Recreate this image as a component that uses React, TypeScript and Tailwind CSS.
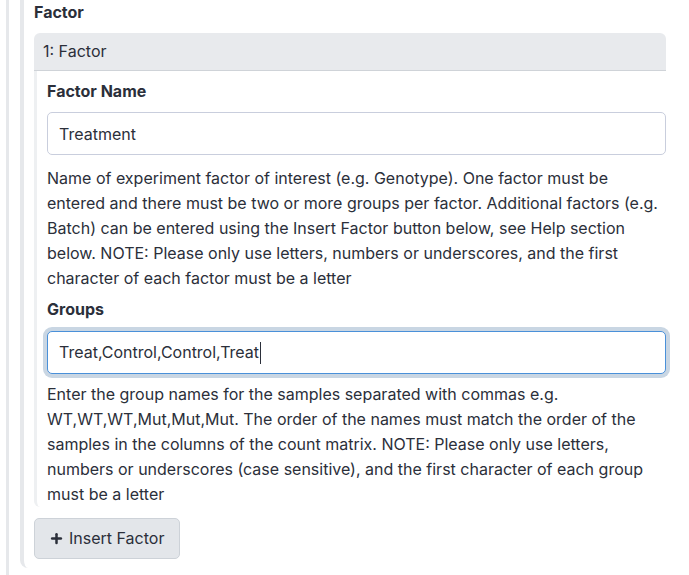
import { Plus } from 'lucide-react'

const font = { fontFamily: 'Inter, "Noto Sans", sans-serif' }

export default function App() {
  return (
    <div
      className="h-[575px] w-[689px] overflow-hidden bg-white text-[16px] leading-[25px] text-[#2b2f3a]"
      style={font}
    >
      <div className="ml-[6px] h-full border-l-[3px] border-[#e6e8eb] pl-[11px]">
        <div className="h-[568px] rounded-bl-[8px] border-l-[4px] border-[#e6e8eb] pl-[10px] pr-[23px]">
          {/* Section title */}
          <h4 className="font-bold leading-[24px] text-[#2b2f3a]">Factor</h4>

          {/* Factor card */}
          <div className="mt-[9px]">
            <div className="flex h-[38px] items-center rounded-t-[6px] border-b border-[#cfd3d8] bg-[#e8eaed] px-[9px] text-[#2b2f3a]">
              1: Factor
            </div>
            <div className="rounded-bl-[6px] border-l-[3px] border-[#eef0f2] pl-[10px]">
              <label className="block pt-[8px] font-bold leading-[24px]">Factor Name</label>
              <input
                readOnly
                value="Treatment"
                className="mt-[9px] block h-[43px] w-full rounded-[5px] border border-[#c9cedd] bg-white px-[11px] text-[16px] text-[#2b2f3a] outline-none"
                style={font}
              />
              <p className="mt-[11px]">
                Name of experiment factor of interest (e.g. Genotype). One factor must be entered and there must be two or
                more groups per factor. Additional factors (e.g. Batch) can be entered using the Insert Factor button
                below, see Help section below. NOTE: Please only use letters, numbers or underscores, and the first
                character of each factor must be a letter
              </p>

              <label className="mt-[6px] block font-bold leading-[24px]">Groups</label>
              <div className="mt-[10px] flex h-[43px] w-full items-center rounded-[5px] border border-[#4a90d9] bg-white px-[11px] text-[#2b2f3a] shadow-[0_0_0_4px_#c9d6e3]">
                <span>Treat,Control,Control,Treat</span>
                <span className="ml-px inline-block h-[22px] w-px bg-[#2b2f3a]" />
              </div>
              <p className="mt-[8px]">
                Enter the group names for the samples separated with commas e.g. WT,WT,WT,Mut,Mut,Mut. The order of the
                names must match the order of the samples in the columns of the count matrix. NOTE: Please only use
                letters, numbers or underscores (case sensitive), and the first character of each group must be a letter
              </p>
            </div>
          </div>

          <button className="mt-[11px] flex h-[41px] items-center gap-[5px] rounded-[5px] border border-[#cdd2d8] bg-[#e3e6ea] pl-[14px] pr-[15px] text-[#2b2f3a]">
            <Plus className="h-[15px] w-[15px]" strokeWidth={4} />
            <span>Insert Factor</span>
          </button>
        </div>
      </div>
    </div>
  )
}
